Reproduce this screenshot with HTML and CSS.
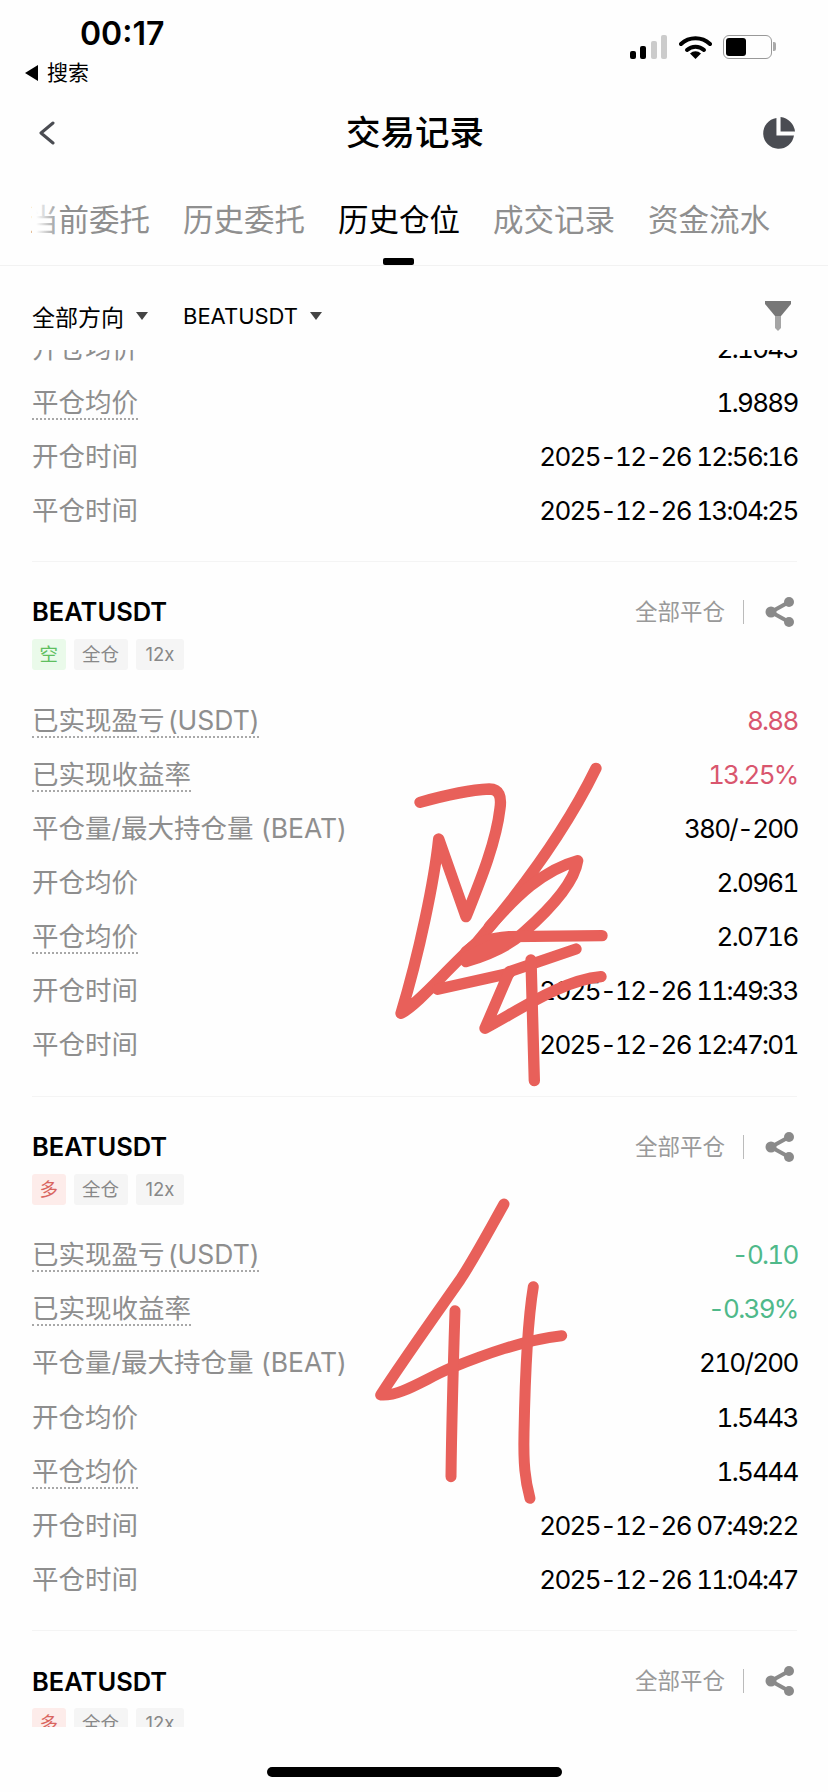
FILE: index.html
```html
<!DOCTYPE html>
<html lang="zh-CN">
<head>
    <meta charset="UTF-8">
    <meta name="viewport" content="width=device-width, initial-scale=1.0">
    <title>交易记录</title>
    <link rel="stylesheet" href="styles.css">
</head>
<body>
    <div class="phone">
        <div class="status-bar">
            <div class="status-left">
                <div class="status-time">00:17</div>
                <div class="status-back"><span class="status-arrow"></span>搜索</div>
            </div>
            <div class="status-icons">
                <svg class="icon-signal" viewBox="0 0 38 24">
                    <rect x="0" y="16" width="6" height="8" rx="2" fill="#000"/>
                    <rect x="10" y="11" width="6" height="13" rx="2" fill="#000"/>
                    <rect x="21" y="6" width="6" height="18" rx="2" fill="#ccc"/>
                    <rect x="31" y="0" width="6" height="24" rx="2" fill="#ccc"/>
                </svg>
                <svg class="icon-wifi" viewBox="0 0 33 24">
                    <path d="M2 9 A21 21 0 0 1 31 9" fill="none" stroke="#000" stroke-width="4" stroke-linecap="round"/>
                    <path d="M8 15 A12.5 12.5 0 0 1 25 15" fill="none" stroke="#000" stroke-width="4" stroke-linecap="round"/>
                    <path d="M16.5 24 L11 18.5 A8 8 0 0 1 22 18.5 Z" fill="#000"/>
                </svg>
                <div class="battery"><div class="battery-fill"></div></div>
            </div>
        </div>

        <div class="nav-bar">
            <svg class="icon-back" viewBox="0 0 17 24">
                <path d="M15 2 L3 12 L15 22" fill="none" stroke="#4a4c52" stroke-width="3" stroke-linecap="round" stroke-linejoin="round"/>
            </svg>
            <h1 class="nav-title">交易记录</h1>
            <svg class="icon-pie" viewBox="0 0 32 32">
                <path d="M14 1 A15 15 0 1 0 31 18 L14 18 Z" fill="#4a4c52"/>
                <path d="M18 0 A16 16 0 0 1 32 14 L18 14 Z" fill="#4a4c52"/>
            </svg>
        </div>

        <div class="tabs">
            <span class="tab tab-first">当前委托</span>
            <span class="tab">历史委托</span>
            <span class="tab tab-active">历史仓位</span>
            <span class="tab">成交记录</span>
            <span class="tab">资金流水</span>
        </div>

        <div class="filter-bar">
            <span class="filter-item">全部方向<i class="caret"></i></span>
            <span class="filter-item filter-symbol">BEATUSDT<i class="caret"></i></span>
            <svg class="icon-filter" viewBox="0 0 26 30">
                <path d="M0 0 H26 V3 L16 15 H10 L0 3 Z" fill="#777"/>
                <path d="M10 15 H16 V27 L13 30 L10 27 Z" fill="#a5a5a5"/>
            </svg>
        </div>

        <div class="list">
            <div class="card card-first">
                <div class="row"><span class="label">开仓均价</span><span class="value">2.1043</span></div>
                <div class="row"><span class="label dotted">平仓均价</span><span class="value">1.9889</span></div>
                <div class="row"><span class="label">开仓时间</span><span class="value">2025-12-26 12:56:16</span></div>
                <div class="row"><span class="label">平仓时间</span><span class="value">2025-12-26 13:04:25</span></div>
            </div>

            <div class="card">
                <div class="card-head">
                    <span class="card-symbol">BEATUSDT</span>
                    <div class="card-actions">
                        <span class="close-all">全部平仓</span>
                        <svg class="icon-share" viewBox="0 0 30 30">
                            <path d="M24 5 L6 15 L24 25" fill="none" stroke="#8a8a8a" stroke-width="4"/>
                            <circle cx="24" cy="5" r="5" fill="#8a8a8a"/>
                            <circle cx="6" cy="15" r="5.5" fill="#8a8a8a"/>
                            <circle cx="24" cy="25" r="5" fill="#8a8a8a"/>
                        </svg>
                    </div>
                </div>
                <div class="tags">
                    <span class="tag tag-side tag-short">空</span>
                    <span class="tag">全仓</span>
                    <span class="tag tag-lever">12x</span>
                </div>
                <div class="rows">
                    <div class="row"><span class="label dotted">已实现盈亏 (USDT)</span><span class="value value-up">8.88</span></div>
                    <div class="row"><span class="label dotted">已实现收益率</span><span class="value value-up">13.25%</span></div>
                    <div class="row"><span class="label">平仓量/最大持仓量 (BEAT)</span><span class="value">380/-200</span></div>
                    <div class="row"><span class="label">开仓均价</span><span class="value">2.0961</span></div>
                    <div class="row"><span class="label dotted">平仓均价</span><span class="value">2.0716</span></div>
                    <div class="row"><span class="label">开仓时间</span><span class="value">2025-12-26 11:49:33</span></div>
                    <div class="row"><span class="label">平仓时间</span><span class="value">2025-12-26 12:47:01</span></div>
                </div>
            </div>

            <div class="card">
                <div class="card-head">
                    <span class="card-symbol">BEATUSDT</span>
                    <div class="card-actions">
                        <span class="close-all">全部平仓</span>
                        <svg class="icon-share" viewBox="0 0 30 30">
                            <path d="M24 5 L6 15 L24 25" fill="none" stroke="#8a8a8a" stroke-width="4"/>
                            <circle cx="24" cy="5" r="5" fill="#8a8a8a"/>
                            <circle cx="6" cy="15" r="5.5" fill="#8a8a8a"/>
                            <circle cx="24" cy="25" r="5" fill="#8a8a8a"/>
                        </svg>
                    </div>
                </div>
                <div class="tags">
                    <span class="tag tag-side tag-long">多</span>
                    <span class="tag">全仓</span>
                    <span class="tag tag-lever">12x</span>
                </div>
                <div class="rows">
                    <div class="row"><span class="label dotted">已实现盈亏 (USDT)</span><span class="value value-down">-0.10</span></div>
                    <div class="row"><span class="label dotted">已实现收益率</span><span class="value value-down">-0.39%</span></div>
                    <div class="row"><span class="label">平仓量/最大持仓量 (BEAT)</span><span class="value">210/200</span></div>
                    <div class="row"><span class="label">开仓均价</span><span class="value">1.5443</span></div>
                    <div class="row"><span class="label dotted">平仓均价</span><span class="value">1.5444</span></div>
                    <div class="row"><span class="label">开仓时间</span><span class="value">2025-12-26 07:49:22</span></div>
                    <div class="row"><span class="label">平仓时间</span><span class="value">2025-12-26 11:04:47</span></div>
                </div>
            </div>

            <div class="card">
                <div class="card-head">
                    <span class="card-symbol">BEATUSDT</span>
                    <div class="card-actions">
                        <span class="close-all">全部平仓</span>
                        <svg class="icon-share" viewBox="0 0 30 30">
                            <path d="M24 5 L6 15 L24 25" fill="none" stroke="#8a8a8a" stroke-width="4"/>
                            <circle cx="24" cy="5" r="5" fill="#8a8a8a"/>
                            <circle cx="6" cy="15" r="5.5" fill="#8a8a8a"/>
                            <circle cx="24" cy="25" r="5" fill="#8a8a8a"/>
                        </svg>
                    </div>
                </div>
                <div class="tags">
                    <span class="tag tag-side tag-long">多</span>
                    <span class="tag">全仓</span>
                    <span class="tag tag-lever">12x</span>
                </div>
            </div>
        </div>

        <div class="home-area"><div class="home-bar"></div></div>

        <!-- hand written marks drawn over the list -->
        <svg class="scrawl scrawl-top" viewBox="0 0 1568 1080">
            <g fill="none" stroke="#e8605a" stroke-width="34" stroke-linecap="round" stroke-linejoin="round">
                <path d="M352 187 C430 165 500 150 560 147 C590 147 597 170 592 205 C580 310 530 430 490 530 L408 297 C395 420 350 640 295 820 C350 790 430 690 520 610 C640 470 780 290 880 85"/>
                <path d="M560 560 C640 470 720 390 825 362 C815 430 740 510 660 580 C610 625 540 650 490 665"/>
                <path d="M490 635 C530 600 570 595 620 590 L898 587"/>
                <path d="M495 655 L610 600" stroke-width="44"/>
                <path d="M405 748 L620 700"/>
                <path d="M820 627 L620 695 L547 865 C650 810 780 720 895 710"/>
                <path d="M685 660 L695 1022"/>
            </g>
        </svg>
        <svg class="scrawl scrawl-bottom" viewBox="0 0 840 1020">
            <g fill="none" stroke="#e8605a" stroke-width="33" stroke-linecap="round" stroke-linejoin="round">
                <path d="M492 72 C440 165 400 240 360 300 C290 400 190 540 122 645 C180 650 250 600 330 565 C430 525 550 480 665 467"/>
                <path d="M345 392 C340 550 335 720 333 890"/>
                <path d="M580 320 C560 440 555 600 552 760 C550 850 555 900 570 955"/>
            </g>
        </svg>
    </div>
</body>
</html>
```

FILE: styles.css
```css
* {
    box-sizing: border-box;
}
body {
    margin: 0;
    background: #fff;
    font-family: Inter, "Noto Sans CJK SC", sans-serif;
}
.phone {
    position: relative;
    width: 828px;
    height: 1792px;
    display: flex;
    flex-direction: column;
    overflow: hidden;
    background: #fefefe;
    color: #000;
}

/* status bar */
.status-bar {
    height: 103px;
    flex: none;
    display: flex;
    justify-content: space-between;
    padding: 14px 53px 0 25px;
}
.status-time {
    margin-left: 55px;
    font-size: 32px;
    line-height: 40px;
    font-weight: 600;
}
.status-back {
    display: flex;
    align-items: center;
    gap: 9px;
    margin-top: 5px;
    font-size: 21px;
    line-height: 28px;
}
.status-arrow {
    width: 0;
    height: 0;
    border-style: solid;
    border-width: 8px 13px 8px 0;
    border-color: transparent #000 transparent transparent;
}
.status-icons {
    display: flex;
    align-items: flex-start;
    gap: 11px;
    padding-top: 21px;
}
.icon-signal {
    width: 38px;
    height: 24px;
}
.icon-wifi {
    width: 33px;
    height: 24px;
}
.battery {
    position: relative;
    width: 49px;
    height: 24px;
    padding: 2px;
    margin-right: 3px;
    border: 1.5px solid #999;
    border-radius: 6px;
}
.battery::after {
    content: "";
    position: absolute;
    top: 6px;
    right: -5px;
    width: 3px;
    height: 9px;
    background: #aaa;
    border-radius: 0 2px 2px 0;
}
.battery-fill {
    width: 20px;
    height: 100%;
    background: #000;
    border-radius: 3px;
}

/* nav */
.nav-bar {
    height: 60px;
    flex: none;
    display: flex;
    align-items: center;
    justify-content: space-between;
    padding: 0 33px 0 38px;
}
.icon-back {
    width: 17px;
    height: 24px;
}
.nav-title {
    margin: 0 0 0 13px;
    font-size: 34.5px;
    font-weight: 500;
    line-height: 44px;
}
.icon-pie {
    width: 33px;
    height: 33px;
}

/* tabs */
.tabs {
    position: relative;
    height: 103px;
    flex: none;
    display: flex;
    gap: 33px;
    padding: 5px 0 0 32px;
    overflow: hidden;
    border-bottom: 1px solid #f2f2f2;
}
.tabs::before {
    content: "";
    position: absolute;
    top: 0;
    left: 32px;
    width: 28px;
    height: 100%;
    background: linear-gradient(90deg, #fefefe 15%, rgba(254, 254, 254, 0));
    z-index: 1;
}
.tab {
    position: relative;
    flex: none;
    font-size: 30.5px;
    line-height: 104px;
    height: 97px;
    color: #8f8f8f;
}
.tab-first {
    margin-left: -4px;
}
.tab-active {
    color: #000;
}
.tab-active::after {
    content: "";
    position: absolute;
    left: 45px;
    bottom: 0;
    width: 31px;
    height: 7px;
    background: #000;
    border-radius: 2px;
}

/* filter */
.filter-bar {
    height: 84px;
    flex: none;
    display: flex;
    align-items: center;
    gap: 35px;
    padding: 16px 37px 0 32px;
}
.filter-item {
    display: flex;
    align-items: center;
    gap: 12px;
    font-size: 23px;
}
.filter-symbol {
    font-size: 22px;
}
.caret {
    width: 0;
    height: 0;
    border-style: solid;
    border-width: 8px 6px 0 6px;
    border-color: #444 transparent transparent transparent;
}
.icon-filter {
    width: 26px;
    height: 30px;
    margin-left: auto;
}

/* list */
.list {
    flex: 1;
    min-height: 0;
    overflow: hidden;
    padding: 0 31px 0 32px;
}
.card {
    padding: 32px 0 23.6px;
    border-bottom: 1px solid #f4f4f4;
}
.card-first {
    margin-top: -29px;
    padding-top: 0;
    padding-bottom: 23.4px;
}
.card-head {
    height: 36px;
    display: flex;
    align-items: center;
    justify-content: space-between;
}
.card-symbol {
    font-size: 25.5px;
    font-weight: 600;
}
.card-actions {
    display: flex;
    align-items: center;
}
.close-all {
    padding-right: 18px;
    border-right: 1px solid #bbb;
    font-size: 22.5px;
    line-height: 24px;
    color: #999;
}
.icon-share {
    width: 30px;
    height: 30px;
    margin-left: 21px;
    margin-right: 2px;
}
.tags {
    display: flex;
    gap: 8px;
    margin: 9px 0 23px;
}
.tag {
    height: 31px;
    padding: 0 8.5px;
    font-size: 18.5px;
    line-height: 31px;
    color: #888;
    background: #f5f5f5;
    border-radius: 3px;
}
.tag-side {
    padding: 0 7.5px;
}
.tag-lever {
    padding: 0 10px;
}
.tag-short {
    color: #5fbf5f;
    background: #eafaea;
}
.tag-long {
    color: #d9655f;
    background: #fdecea;
}
.row {
    height: 54.15px;
    display: flex;
    align-items: center;
    justify-content: space-between;
}
.label {
    font-size: 26.5px;
    line-height: 31px;
    color: #8e8e8e;
    border-bottom: 2px dotted transparent;
    border-top: 2px solid transparent;
}
.dotted {
    border-bottom-color: #a8a8a8;
    word-spacing: -4px;
}
.value {
    font-size: 26px;
    font-variant-numeric: tabular-nums;
    letter-spacing: -1.7px;
    margin-right: -0.7px;
    color: #000;
}
.value-up {
    color: #d9566e;
}
.value-down {
    color: #4fb98a;
}

/* home bar */
.home-area {
    position: relative;
    height: 65px;
    flex: none;
    padding-top: 40px;
    background: #fefefe;
}
.home-bar {
    width: 295px;
    height: 10px;
    margin-left: 267px;
    background: #000;
    border-radius: 5px;
}

/* marks on top of the list */
.scrawl {
    position: absolute;
}
.scrawl-top {
    left: 300px;
    top: 740px;
    width: 528px;
    height: 360px;
}
.scrawl-bottom {
    left: 340px;
    top: 1180px;
    width: 280px;
    height: 340px;
}
```
